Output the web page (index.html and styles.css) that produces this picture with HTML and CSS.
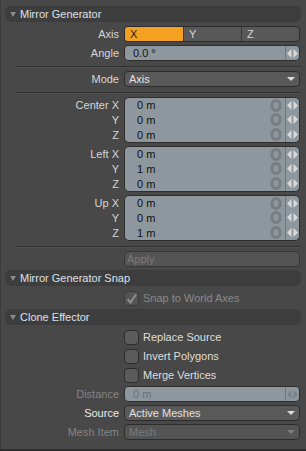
FILE: index.html
```html
<!DOCTYPE html>
<html lang="en">
<head>
  <meta charset="UTF-8" />
  <title>Mirror Generator</title>
  <link rel="stylesheet" href="styles.css">
</head>
<body>
  <div class="panel">
    <div class="head"><span class="tri"></span>Mirror Generator</div>
    <div class="row first">
      <label>Axis</label>
      <div class="seg"><span class="on">X</span><span>Y</span><span>Z</span></div>
    </div>
    <div class="row">
      <label>Angle</label>
      <div class="num">
        <span class="val">0.0 °</span>
        <span class="spin"><svg width="11" height="9" viewBox="0 0 11 9"><polygon points="0,4.5 4.5,0 4.5,9"/><polygon points="6.5,0 11,4.5 6.5,9"/></svg></span>
      </div>
    </div>
    <div class="sep"></div>
    <div class="row">
      <label>Mode</label>
      <div class="drop"><span>Axis</span><span class="arr"></span></div>
    </div>
    <div class="sep"></div>

    <div class="grp">
      <div class="labels"><label>Center X</label><label>Y</label><label>Z</label></div>
      <div class="box">
        <div class="line"><span class="val">0 m</span><svg class="reset" width="12" height="13" viewBox="0 0 12 13"><ellipse cx="6" cy="6.5" rx="4.2" ry="4.9"/></svg><span class="spin"><svg width="11" height="9" viewBox="0 0 11 9"><polygon points="0,4.5 4.5,0 4.5,9"/><polygon points="6.5,0 11,4.5 6.5,9"/></svg></span></div>
        <div class="line"><span class="val">0 m</span><svg class="reset" width="12" height="13" viewBox="0 0 12 13"><ellipse cx="6" cy="6.5" rx="4.2" ry="4.9"/></svg><span class="spin"><svg width="11" height="9" viewBox="0 0 11 9"><polygon points="0,4.5 4.5,0 4.5,9"/><polygon points="6.5,0 11,4.5 6.5,9"/></svg></span></div>
        <div class="line"><span class="val">0 m</span><svg class="reset" width="12" height="13" viewBox="0 0 12 13"><ellipse cx="6" cy="6.5" rx="4.2" ry="4.9"/></svg><span class="spin"><svg width="11" height="9" viewBox="0 0 11 9"><polygon points="0,4.5 4.5,0 4.5,9"/><polygon points="6.5,0 11,4.5 6.5,9"/></svg></span></div>
      </div>
    </div>
    <div class="grp">
      <div class="labels"><label>Left X</label><label>Y</label><label>Z</label></div>
      <div class="box">
        <div class="line"><span class="val">0 m</span><svg class="reset" width="12" height="13" viewBox="0 0 12 13"><ellipse cx="6" cy="6.5" rx="4.2" ry="4.9"/></svg><span class="spin"><svg width="11" height="9" viewBox="0 0 11 9"><polygon points="0,4.5 4.5,0 4.5,9"/><polygon points="6.5,0 11,4.5 6.5,9"/></svg></span></div>
        <div class="line"><span class="val">1 m</span><svg class="reset" width="12" height="13" viewBox="0 0 12 13"><ellipse cx="6" cy="6.5" rx="4.2" ry="4.9"/></svg><span class="spin"><svg width="11" height="9" viewBox="0 0 11 9"><polygon points="0,4.5 4.5,0 4.5,9"/><polygon points="6.5,0 11,4.5 6.5,9"/></svg></span></div>
        <div class="line"><span class="val">0 m</span><svg class="reset" width="12" height="13" viewBox="0 0 12 13"><ellipse cx="6" cy="6.5" rx="4.2" ry="4.9"/></svg><span class="spin"><svg width="11" height="9" viewBox="0 0 11 9"><polygon points="0,4.5 4.5,0 4.5,9"/><polygon points="6.5,0 11,4.5 6.5,9"/></svg></span></div>
      </div>
    </div>
    <div class="grp">
      <div class="labels"><label>Up X</label><label>Y</label><label>Z</label></div>
      <div class="box">
        <div class="line"><span class="val">0 m</span><svg class="reset" width="12" height="13" viewBox="0 0 12 13"><ellipse cx="6" cy="6.5" rx="4.2" ry="4.9"/></svg><span class="spin"><svg width="11" height="9" viewBox="0 0 11 9"><polygon points="0,4.5 4.5,0 4.5,9"/><polygon points="6.5,0 11,4.5 6.5,9"/></svg></span></div>
        <div class="line"><span class="val">0 m</span><svg class="reset" width="12" height="13" viewBox="0 0 12 13"><ellipse cx="6" cy="6.5" rx="4.2" ry="4.9"/></svg><span class="spin"><svg width="11" height="9" viewBox="0 0 11 9"><polygon points="0,4.5 4.5,0 4.5,9"/><polygon points="6.5,0 11,4.5 6.5,9"/></svg></span></div>
        <div class="line"><span class="val">1 m</span><svg class="reset" width="12" height="13" viewBox="0 0 12 13"><ellipse cx="6" cy="6.5" rx="4.2" ry="4.9"/></svg><span class="spin"><svg width="11" height="9" viewBox="0 0 11 9"><polygon points="0,4.5 4.5,0 4.5,9"/><polygon points="6.5,0 11,4.5 6.5,9"/></svg></span></div>
      </div>
    </div>
    <div class="sep"></div>
    <div class="row">
      <label></label>
      <div class="btn off">Apply</div>
    </div>

    <div class="head"><span class="tri"></span>Mirror Generator Snap</div>
    <div class="row first">
      <label></label>
      <div class="check off">
        <span class="cb"><svg width="13" height="13" viewBox="0 0 13 13"><path d="M2.5 7 L5.5 10.5 L11 2.5"/></svg></span>
        <span>Snap to World Axes</span>
      </div>
    </div>

    <div class="head"><span class="tri"></span>Clone Effector</div>
    <div class="row first">
      <label></label>
      <div class="check"><span class="cb"></span><span>Replace Source</span></div>
    </div>
    <div class="row">
      <label></label>
      <div class="check"><span class="cb"></span><span>Invert Polygons</span></div>
    </div>
    <div class="row">
      <label></label>
      <div class="check"><span class="cb"></span><span>Merge Vertices</span></div>
    </div>
    <div class="row">
      <label class="dim">Distance</label>
      <div class="num off">
        <span class="val">0 m</span>
        <span class="spin"><svg width="11" height="9" viewBox="0 0 11 9"><polygon points="0,4.5 4.5,0 4.5,9"/><polygon points="6.5,0 11,4.5 6.5,9"/></svg></span>
      </div>
    </div>
    <div class="row">
      <label class="bright">Source</label>
      <div class="drop"><span>Active Meshes</span><span class="arr"></span></div>
    </div>
    <div class="row">
      <label class="dim">Mesh Item</label>
      <div class="drop off"><span>Mesh</span><span class="arr"></span></div>
    </div>
  </div>
</body>
</html>
```

FILE: styles.css
```css
body {
  margin: 0;
  background: #484848;
  font-family: "Liberation Sans", Arial, sans-serif;
  font-size: 11px;
  color: #d6d6d6;
}
.panel {
  width: 306px;
  height: 451px;
  box-sizing: border-box;
  padding-top: 6px;
  border-bottom: 2px solid #2f2f2f;
  box-shadow: inset 1px 0 0 #3c3c3c;
  overflow: hidden;
}
.head {
  height: 16px;
  margin: 3px 5px 0 5px;
  padding-left: 5px;
  background: #3d3d3d;
  border-radius: 6px;
  display: flex;
  align-items: center;
  color: #dde2e9;
}
.panel > .head:first-child {
  margin-top: 0;
}
.tri {
  width: 0;
  height: 0;
  border-left: 3px solid transparent;
  border-right: 3px solid transparent;
  border-top: 5px solid #8a8a8a;
  margin-right: 4px;
}
.row {
  display: grid;
  grid-template-columns: 119px 176px;
  column-gap: 5px;
  height: 16px;
  margin-top: 3px;
  align-items: center;
}
.row.first {
  margin-top: 4px;
}
label {
  text-align: right;
  color: #d6d6d6;
}
label.dim {
  color: #858585;
}
label.bright {
  color: #ececec;
}
.sep {
  height: 1px;
  margin: 5px 6px 1px 16px;
  border-top: 1px solid #303030;
  background: #505050;
}
.seg {
  height: 16px;
  box-sizing: border-box;
  border: 1px solid #2c2c2c;
  border-radius: 4px;
  overflow: hidden;
  display: grid;
  grid-template-columns: 58px 1fr 1fr;
  background: #585858;
}
.seg span {
  padding-left: 5px;
  line-height: 14px;
  color: #d2d8df;
  border-left: 1px solid #383838;
}
.seg span.on {
  background: #f4a020;
  color: #1a1a1a;
  border-left: none;
}
.num {
  height: 16px;
  box-sizing: border-box;
  border: 1px solid #2e2e2e;
  border-radius: 4px;
  background: #8e979d;
  display: flex;
  align-items: stretch;
}
.val {
  flex: 1;
  padding-left: 8px;
  line-height: 14px;
  color: #111;
}
.spin {
  width: 13px;
  border-left: 1px solid #6f777c;
  display: flex;
  align-items: center;
  justify-content: center;
}
.spin svg {
  fill: #dadada;
}
.num.off .val {
  color: #6b7074;
}
.num.off .spin svg {
  fill: #7b8388;
}
.grp {
  display: grid;
  grid-template-columns: 119px 176px;
  column-gap: 5px;
  height: 46px;
  margin-top: 3px;
}
.labels {
  display: grid;
  grid-template-rows: repeat(3, 1fr);
  align-items: center;
}
.box {
  box-sizing: border-box;
  border: 1px solid #2e2e2e;
  border-radius: 5px;
  background: #8e979d;
  display: grid;
  grid-template-rows: repeat(3, 1fr);
}
.line {
  display: flex;
  align-items: stretch;
}
.line .val {
  padding-left: 12px;
  display: flex;
  align-items: center;
}
.reset {
  align-self: center;
  margin-right: 3px;
  fill: none;
  stroke: #777d82;
  stroke-width: 3;
}
.drop {
  height: 16px;
  box-sizing: border-box;
  border: 1px solid #2c2c2c;
  border-radius: 4px;
  background: #595959;
  display: flex;
  align-items: center;
  justify-content: space-between;
  padding: 0 4px;
  color: #e2e2e2;
}
.arr {
  width: 0;
  height: 0;
  border-left: 4px solid transparent;
  border-right: 4px solid transparent;
  border-top: 4px solid #dcdcdc;
}
.drop.off {
  background: #545454;
  color: #7c7c7c;
}
.drop.off .arr {
  border-top-color: #7c7c7c;
}
.btn {
  height: 16px;
  box-sizing: border-box;
  border: 1px solid #363636;
  border-radius: 4px;
  background: #545454;
  padding-left: 2px;
  line-height: 14px;
}
.btn.off {
  color: #7b7b7b;
}
.check {
  display: flex;
  align-items: center;
  gap: 4px;
  color: #dedede;
}
.cb {
  width: 15px;
  height: 15px;
  box-sizing: border-box;
  border: 1px solid #2c2c2c;
  border-radius: 4px;
  background: #5b5b5b;
  display: flex;
  align-items: center;
  justify-content: center;
}
.check.off {
  color: #888;
}
.check.off .cb {
  background: #545454;
  border-color: #3a3a3a;
}
.cb svg {
  fill: none;
  stroke: #8f8f8f;
  stroke-width: 2;
}
```
